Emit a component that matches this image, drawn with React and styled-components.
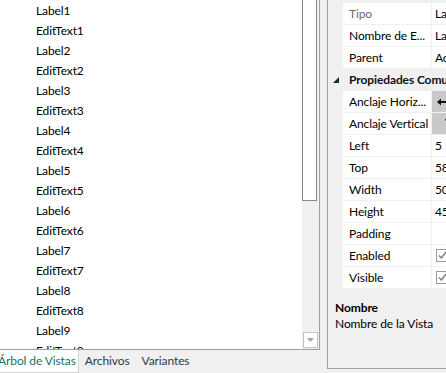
import React from 'react';
import styled, { createGlobalStyle } from 'styled-components';

const Global = createGlobalStyle`
  html, body {
    margin: 0;
    padding: 0;
    background: #f0f0f0;
  }
  body {
    font-family: Lato, "Noto Sans", sans-serif;
    font-size: 12px;
    letter-spacing: -0.1px;
    color: #000;
  }
`;

const treeItems = [
  'Label1', 'EditText1', 'Label2', 'EditText2', 'Label3', 'EditText3',
  'Label4', 'EditText4', 'Label5', 'EditText5', 'Label6', 'EditText6',
  'Label7', 'EditText7', 'Label8', 'EditText8', 'Label9', 'EditText9',
];

const props = [
  { name: 'Tipo', value: 'Label', readOnly: true },
  { name: 'Nombre de E...', value: 'Label1' },
  { name: 'Parent', value: 'Activity' },
  { category: 'Propiedades Comunes' },
  { name: 'Anclaje Horiz...', anchor: 'h' },
  { name: 'Anclaje Vertical', anchor: 'v' },
  { name: 'Left', value: '5' },
  { name: 'Top', value: '58' },
  { name: 'Width', value: '50' },
  { name: 'Height', value: '45' },
  { name: 'Padding', value: '' },
  { name: 'Enabled', check: true },
  { name: 'Visible', check: true },
];

export default function App() {
  return (
    <>
      <Global />
      <Screen>
        <LeftColumn>
          <TreePanel>
            <TreeList>
              {treeItems.map((t) => (
                <TreeRow key={t}>{t}</TreeRow>
              ))}
            </TreeList>
            <VScroll>
              <Thumb />
              <Track />
              <ArrowButton>
                <svg width="7" height="4" viewBox="0 0 7 4">
                  <polygon points="0,0 7,0 3.5,4" fill="#a6a6a6" />
                </svg>
              </ArrowButton>
            </VScroll>
          </TreePanel>
          <TabStrip>
            <Tab active>Árbol de Vistas</Tab>
            <Tab>Archivos</Tab>
            <Tab>Variantes</Tab>
          </TabStrip>
        </LeftColumn>
        <Splitter />
        <RightPanel>
          <Grid>
            <GridTop />
            {props.map((p) =>
              p.category ? (
                <CategoryRow key={p.category}>
                  <Margin>
                    <svg width="6" height="6" viewBox="0 0 6 6">
                      <polygon points="6,0 6,6 0,6" fill="#262626" />
                    </svg>
                  </Margin>
                  <CategoryName>{p.category}</CategoryName>
                </CategoryRow>
              ) : (
                <PropRow key={p.name}>
                  <Margin />
                  <NameCell readOnly={p.readOnly}>{p.name}</NameCell>
                  <ValueCell shaded={!!p.anchor}>
                    {p.anchor === 'h' && (
                      <svg width="10" height="8" viewBox="0 0 10 8">
                        <polygon points="0,4 4,0.5 4,7.5" fill="#111" />
                        <rect x="3" y="3" width="7" height="2" fill="#111" />
                      </svg>
                    )}
                    {p.anchor === 'v' && (
                      <VArrow width="8" height="10" viewBox="0 0 8 10">
                        <rect x="0" y="0" width="8" height="1.5" fill="#333" />
                        <rect x="3.2" y="1" width="1.6" height="9" fill="#333" />
                      </VArrow>
                    )}
                    {p.check && (
                      <CheckBox>
                        <svg width="11" height="11" viewBox="0 0 11 11">
                          <polyline points="2,5.5 4.5,8 9,2" fill="none" stroke="#7a7a7a" strokeWidth="1.4" />
                        </svg>
                      </CheckBox>
                    )}
                    {p.value}
                  </ValueCell>
                </PropRow>
              )
            )}
          </Grid>
          <Description>
            <DescTitle>Nombre</DescTitle>
            <DescText>Nombre de la Vista</DescText>
          </Description>
        </RightPanel>
      </Screen>
    </>
  );
}

const Screen = styled.div`
  display: flex;
  width: 446px;
  height: 373px;
  overflow: hidden;
  background: #f0f0f0;
`;

const LeftColumn = styled.div`
  width: 320px;
  flex-shrink: 0;
  display: flex;
  flex-direction: column;
  overflow: hidden;
`;

const TreePanel = styled.div`
  display: flex;
  height: 349px;
  flex-shrink: 0;
  border-right: 1px solid #a0a0a0;
  border-bottom: 1px solid #a0a0a0;
  background: #fff;
`;

const TreeList = styled.div`
  width: 302px;
  overflow: hidden;
  background: #fff;
`;

const TreeRow = styled.div`
  height: 20px;
  line-height: 21px;
  padding-left: 36px;
  white-space: nowrap;
`;

const VScroll = styled.div`
  width: 17px;
  display: flex;
  flex-direction: column;
  background: #f0f0f0;
`;

const Thumb = styled.div`
  width: 13px;
  height: 200px;
  background: #fff;
  border: 1px solid #858585;
  border-top: none;
`;

const Track = styled.div`
  flex: 1;
`;

const ArrowButton = styled.div`
  width: 13px;
  height: 14px;
  margin: 0 0 1px 1px;
  border: 1px solid #c4c4c4;
  background: #fff;
  display: flex;
  align-items: center;
  justify-content: center;
`;

const TabStrip = styled.div`
  display: flex;
  height: 23px;
  margin-left: -2px;
`;

const Tab = styled.div`
  flex-shrink: 0;
  height: ${(p) => (p.active ? '22px' : '23px')};
  line-height: 21px;
  padding: 0 6px;
  white-space: nowrap;
  background: ${(p) => (p.active ? '#fff' : 'transparent')};
  border-right: ${(p) => (p.active ? '1px solid #d4d4d4' : 'none')};
  border-bottom: ${(p) => (p.active ? '1px solid #d4d4d4' : 'none')};
  color: ${(p) => (p.active ? '#1d6f66' : '#2b3a4a')};
  padding-left: ${(p) => (p.active ? '0' : '6px')};
  padding-right: ${(p) => (p.active ? '2px' : '6px')};
`;

const Splitter = styled.div`
  width: 7px;
  flex-shrink: 0;
`;

const RightPanel = styled.div`
  width: 220px;
  flex-shrink: 0;
  height: 368px;
  border-left: 1px solid #a0a0a0;
  border-bottom: 1px solid #a0a0a0;
  display: flex;
  flex-direction: column;
  background: #f0f0f0;
`;

const Grid = styled.div`
  display: flex;
  flex-direction: column;
`;

const GridTop = styled.div`
  height: 3px;
  background: #f0f0f0;
`;

const PropRow = styled.div`
  display: flex;
  height: 21px;
  border-bottom: 1px solid #f0f0f0;
`;

const CategoryRow = styled.div`
  display: flex;
  height: 22px;
  background: #f0f0f0;
`;

const Margin = styled.div`
  width: 15px;
  flex-shrink: 0;
  background: #f0f0f0;
  display: flex;
  align-items: center;
  justify-content: center;
  padding-left: 1px;
  box-sizing: border-box;
`;

const NameCell = styled.div`
  width: 82px;
  padding-left: 6px;
  background: #fff;
  border-right: 1px solid #f0f0f0;
  line-height: 22px;
  white-space: nowrap;
  overflow: hidden;
  color: ${(p) => (p.readOnly ? '#6d6d6d' : '#000')};
`;

const CategoryName = styled.div`
  padding-left: 6px;
  line-height: 22px;
  font-weight: bold;
  white-space: nowrap;
  color: #111;
`;

const ValueCell = styled.div`
  flex: 1;
  padding-left: ${(p) => (p.shaded ? '5px' : '3px')};
  background: ${(p) => (p.shaded ? '#c9c9c9' : '#fff')};
  line-height: 22px;
  white-space: nowrap;
  overflow: hidden;
  display: flex;
  align-items: center;
`;

const VArrow = styled.svg`
  margin-left: 8px;
`;

const CheckBox = styled.div`
  width: 11px;
  height: 11px;
  border: 1px solid #9a9a9a;
  background: #fff;
  display: flex;
  margin-left: 1px;
`;

const Description = styled.div`
  padding: 9px 7px 0;
  margin-top: 2px;
`;

const DescTitle = styled.div`
  font-weight: bold;
  line-height: 16px;
`;

const DescText = styled.div`
  line-height: 16px;
`;
